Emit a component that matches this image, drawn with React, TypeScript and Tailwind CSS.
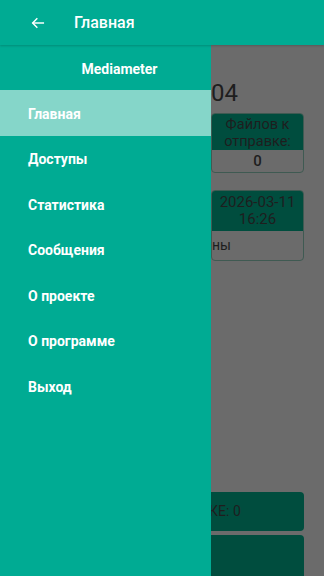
import React from "react";

const items = ["Главная", "Доступы", "Статистика", "Сообщения", "О проекте", "О программе", "Выход"];

export default function App() {
  return (
    <div
      className="relative flex h-[576px] w-[324px] flex-col overflow-hidden bg-[#6b6b6b]"
      style={{ fontFamily: "Roboto, 'Noto Sans', sans-serif" }}
    >
      {/* Toolbar */}
      <div className="relative z-20 flex h-[45px] shrink-0 items-center bg-[#00ab93] shadow-[0_1px_2px_rgba(0,0,0,0.18)]">
        <svg className="ml-[30px] h-[16px] w-[16px]" viewBox="0 0 24 24" fill="none" stroke="white" strokeWidth="2.2" strokeLinecap="square">
          <path d="M20 12H5" />
          <path d="M11 5l-7 7 7 7" strokeLinecap="butt" />
        </svg>
        <span className="ml-[28px] pt-[1px] text-[16px] font-medium text-white">Главная</span>
      </div>

      {/* Background page (dimmed) */}
      <div className="flex flex-1 flex-col text-[#1e1e1e]">
        <div className="mt-[34px] w-[238px] text-right text-[24px] leading-[28px] whitespace-nowrap">Дата: 2026-03-04</div>
        <div className="mt-[6px] flex justify-end pr-[20px]">
          <div className="flex w-[93px] flex-col overflow-hidden rounded-[4px] border border-[#3f5a52]">
            <div className="flex h-[36px] flex-col items-center justify-center bg-[#004d3e] pt-[1px] text-[14.5px] leading-[17px]">
              <span>Файлов к</span>
              <span>отправке:</span>
            </div>
            <div className="flex h-[22px] items-center justify-center text-[15px] font-medium">0</div>
          </div>
        </div>
        <div className="mt-[17px] flex justify-end pr-[20px]">
          <div className="flex w-[93px] flex-col overflow-hidden rounded-[4px] border border-[#3f5a52]">
            <div className="flex h-[40px] flex-col items-center justify-center bg-[#004d3e] text-[15px] leading-[17px]">
              <span>2026-03-11</span>
              <span>16:26</span>
            </div>
            <div className="flex h-[29px] items-center overflow-hidden text-[14px]">
              <span className="whitespace-nowrap">ны</span>
            </div>
          </div>
        </div>
        <div className="mt-auto flex flex-col gap-[4px] px-[20px]">
          <div className="flex h-[39px] items-center justify-center rounded-[4px] bg-[#004d3e] pr-[12px] text-[14px]">
            ФАЙЛОВ НА ОТПРАВКЕ: 0
          </div>
          <div className="h-[41px] rounded-t-[4px] bg-[#004d3e]" />
        </div>
      </div>

      {/* Drawer */}
      <div className="absolute bottom-0 left-0 top-[45px] z-10 flex w-[211px] flex-col bg-[#00ab93]">
        <div className="flex h-[45px] items-center justify-center pl-[28px] pt-[3px] text-[14px] font-bold text-white">Mediameter</div>
        {items.map((t, i) => (
          <div
            key={t}
            className={
              i === 0
                ? "flex h-[45.5px] items-center bg-[#85d6c9] pl-[28px] pt-[3px] text-[14px] font-bold text-white"
                : "flex h-[45.5px] items-center pl-[28px] pt-[3px] text-[14px] font-bold text-white"
            }
          >
            {t}
          </div>
        ))}
      </div>
    </div>
  );
}
